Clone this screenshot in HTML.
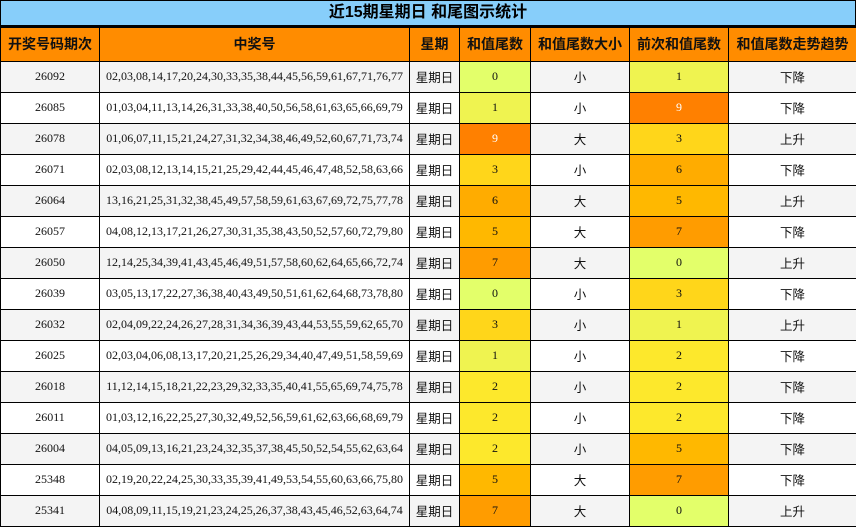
<!DOCTYPE html>
<html><head><meta charset="utf-8"><style>
*{margin:0;padding:0;box-sizing:border-box}
body{width:856px;height:527px;overflow:hidden;background:#fff;font-family:"Liberation Serif","Noto Sans CJK SC",serif}
.t{position:absolute;left:0;top:0;width:856px;height:27px;background:#87cefa;border:1px solid #000;border-bottom:2px solid #000;text-align:center;font:bold 16px/24px "Liberation Sans","Noto Sans CJK SC",sans-serif;color:#000}
table{position:absolute;left:0;top:26px;border-collapse:collapse;table-layout:fixed;width:856px}
td,th{border:1px solid #000;text-align:center;font-size:12px;color:#111;overflow:hidden;white-space:nowrap;padding:0}
th{background:#ff8c00;height:34px;font:bold 14px "Liberation Sans","Noto Sans CJK SC",sans-serif;border-top:2px solid #000}
td{height:31px}
tr:nth-child(even) td{background:#f4f4f4}
tr td.c0{background:#e3ff6a}tr td.c1{background:#eff350}tr td.c2{background:#fde82c}tr td.c3{background:#ffd61a}
tr td.c5{background:#ffb800}tr td.c6{background:#ffac00}tr td.c7{background:#ff9c00}tr td.c9{background:#ff8000;color:#fff}
.cj{font-family:"Liberation Sans","Noto Sans CJK SC",sans-serif;font-size:12.5px}
</style></head><body>
<div class="t">近15期星期日 和尾图示统计</div>
<table>
<colgroup><col style="width:99px"><col style="width:310px"><col style="width:50px"><col style="width:71px"><col style="width:99px"><col style="width:99px"><col style="width:128px"></colgroup>
<tr><th>开奖号码期次</th><th>中奖号</th><th>星期</th><th>和值尾数</th><th>和值尾数大小</th><th>前次和值尾数</th><th>和值尾数走势趋势</th></tr>
<tr><td>26092</td><td>02,03,08,14,17,20,24,30,33,35,38,44,45,56,59,61,67,71,76,77</td><td class="cj">星期日</td><td class="c0">0</td><td class="cj">小</td><td class="c1">1</td><td class="cj">下降</td></tr>
<tr><td>26085</td><td>01,03,04,11,13,14,26,31,33,38,40,50,56,58,61,63,65,66,69,79</td><td class="cj">星期日</td><td class="c1">1</td><td class="cj">小</td><td class="c9">9</td><td class="cj">下降</td></tr>
<tr><td>26078</td><td>01,06,07,11,15,21,24,27,31,32,34,38,46,49,52,60,67,71,73,74</td><td class="cj">星期日</td><td class="c9">9</td><td class="cj">大</td><td class="c3">3</td><td class="cj">上升</td></tr>
<tr><td>26071</td><td>02,03,08,12,13,14,15,21,25,29,42,44,45,46,47,48,52,58,63,66</td><td class="cj">星期日</td><td class="c3">3</td><td class="cj">小</td><td class="c6">6</td><td class="cj">下降</td></tr>
<tr><td>26064</td><td>13,16,21,25,31,32,38,45,49,57,58,59,61,63,67,69,72,75,77,78</td><td class="cj">星期日</td><td class="c6">6</td><td class="cj">大</td><td class="c5">5</td><td class="cj">上升</td></tr>
<tr><td>26057</td><td>04,08,12,13,17,21,26,27,30,31,35,38,43,50,52,57,60,72,79,80</td><td class="cj">星期日</td><td class="c5">5</td><td class="cj">大</td><td class="c7">7</td><td class="cj">下降</td></tr>
<tr><td>26050</td><td>12,14,25,34,39,41,43,45,46,49,51,57,58,60,62,64,65,66,72,74</td><td class="cj">星期日</td><td class="c7">7</td><td class="cj">大</td><td class="c0">0</td><td class="cj">上升</td></tr>
<tr><td>26039</td><td>03,05,13,17,22,27,36,38,40,43,49,50,51,61,62,64,68,73,78,80</td><td class="cj">星期日</td><td class="c0">0</td><td class="cj">小</td><td class="c3">3</td><td class="cj">下降</td></tr>
<tr><td>26032</td><td>02,04,09,22,24,26,27,28,31,34,36,39,43,44,53,55,59,62,65,70</td><td class="cj">星期日</td><td class="c3">3</td><td class="cj">小</td><td class="c1">1</td><td class="cj">上升</td></tr>
<tr><td>26025</td><td>02,03,04,06,08,13,17,20,21,25,26,29,34,40,47,49,51,58,59,69</td><td class="cj">星期日</td><td class="c1">1</td><td class="cj">小</td><td class="c2">2</td><td class="cj">下降</td></tr>
<tr><td>26018</td><td>11,12,14,15,18,21,22,23,29,32,33,35,40,41,55,65,69,74,75,78</td><td class="cj">星期日</td><td class="c2">2</td><td class="cj">小</td><td class="c2">2</td><td class="cj">下降</td></tr>
<tr><td>26011</td><td>01,03,12,16,22,25,27,30,32,49,52,56,59,61,62,63,66,68,69,79</td><td class="cj">星期日</td><td class="c2">2</td><td class="cj">小</td><td class="c2">2</td><td class="cj">下降</td></tr>
<tr><td>26004</td><td>04,05,09,13,16,21,23,24,32,35,37,38,45,50,52,54,55,62,63,64</td><td class="cj">星期日</td><td class="c2">2</td><td class="cj">小</td><td class="c5">5</td><td class="cj">下降</td></tr>
<tr><td>25348</td><td>02,19,20,22,24,25,30,33,35,39,41,49,53,54,55,60,63,66,75,80</td><td class="cj">星期日</td><td class="c5">5</td><td class="cj">大</td><td class="c7">7</td><td class="cj">下降</td></tr>
<tr><td>25341</td><td>04,08,09,11,15,19,21,23,24,25,26,37,38,43,45,46,52,63,64,74</td><td class="cj">星期日</td><td class="c7">7</td><td class="cj">大</td><td class="c0">0</td><td class="cj">上升</td></tr>
</table>
</body></html>
